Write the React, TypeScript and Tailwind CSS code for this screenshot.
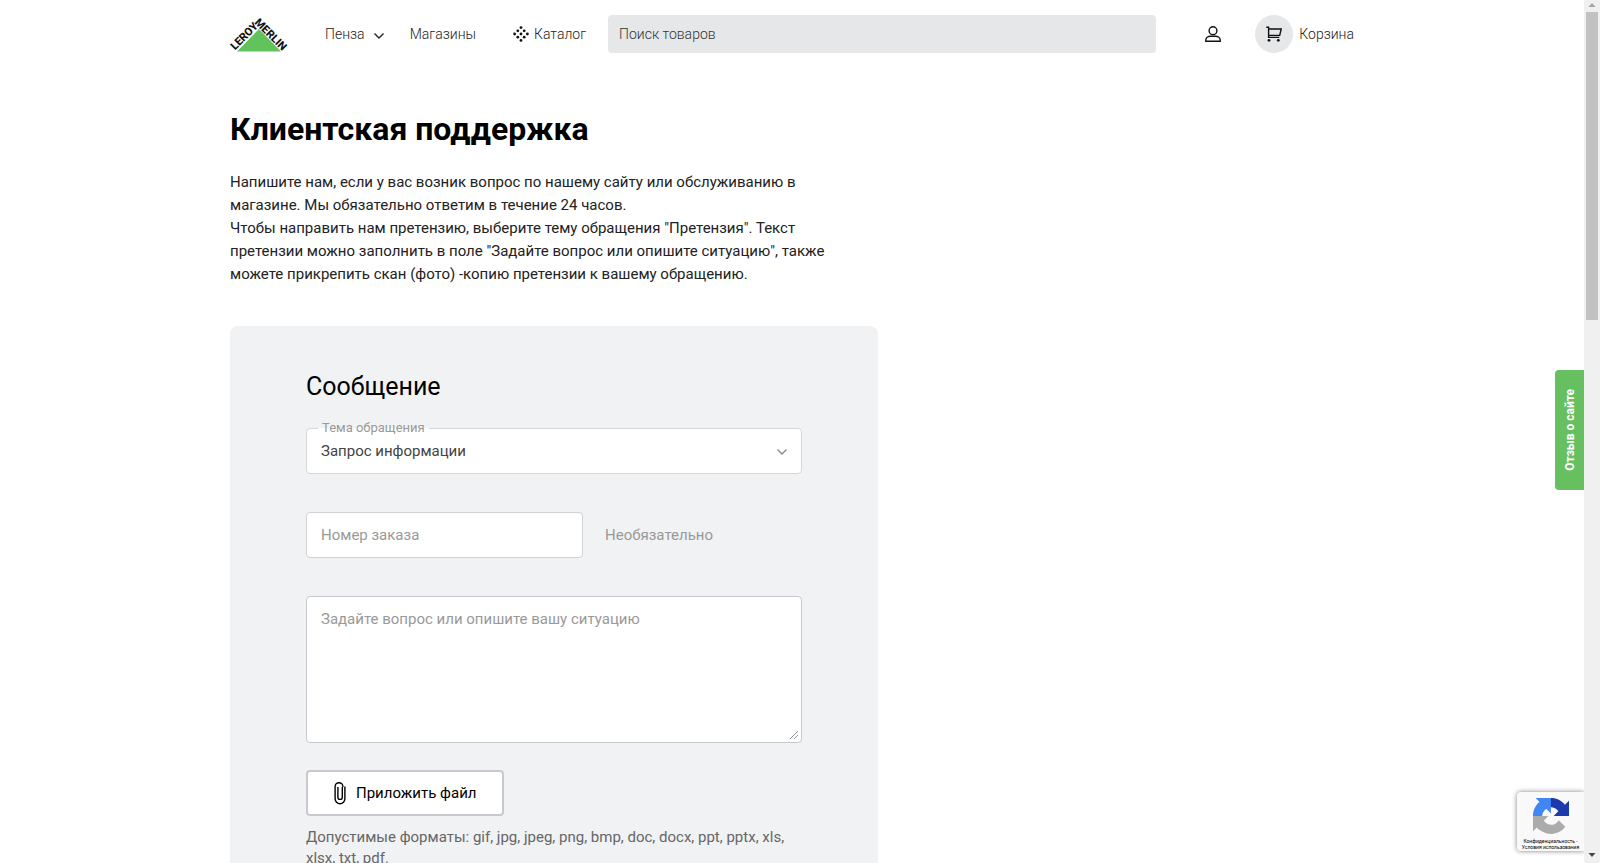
import React, { useState } from 'react';

// ─── Data ─────────────────────────────────────────────────────────────────────

const TOPICS = ['Запрос информации', 'Претензия', 'Благодарность', 'Предложение'];

const FORMATS = ['gif', 'jpg', 'jpeg', 'png', 'bmp', 'doc', 'docx', 'ppt', 'pptx', 'xls', 'xlsx', 'txt', 'pdf'];

// ─── Icons ────────────────────────────────────────────────────────────────────

const Logo: React.FC = () => (
  <svg viewBox="0 0 58 36" className="h-9 w-[58px] overflow-visible" role="img" aria-label="Leroy Merlin">
    <path d="M7 35.5 29 13l22 22.5Z" fill="#62c25c" />
    <g fill="#111" fontFamily="Roboto, sans-serif" fontWeight="800" fontSize="11">
      <text transform="translate(5 34.5) rotate(-45)">LEROY</text>
      <text transform="translate(24 7) rotate(45)">MERLIN</text>
    </g>
  </svg>
);

const Chevron: React.FC<{ className?: string }> = ({ className }) => (
  <svg viewBox="0 0 12 8" className={className} fill="none" stroke="currentColor" strokeWidth="1.4">
    <path d="m1.5 1.5 4.5 4.5 4.5-4.5" />
  </svg>
);

const CatalogIcon: React.FC = () => (
  <svg viewBox="0 0 16 16" className="h-4 w-4" fill="#111">
    {[
      [8, 1.6], [8, 14.4], [1.6, 8], [14.4, 8], [4.8, 4.8],
      [11.2, 4.8], [4.8, 11.2], [11.2, 11.2], [8, 8],
    ].map(([x, y]) => (
      <circle key={`${x}-${y}`} cx={x} cy={y} r="1.4" />
    ))}
  </svg>
);

const UserIcon: React.FC = () => (
  <svg viewBox="0 0 16 16" className="h-4 w-4" fill="none" stroke="#111" strokeWidth="1.4">
    <circle cx="8" cy="4.7" r="3.9" />
    <path d="M.8 15.2v-1.1c0-2.5 2.3-3.9 4.6-3.9h5.2c2.3 0 4.6 1.4 4.6 3.9v1.1Z" />
  </svg>
);

const CartIcon: React.FC = () => (
  <svg viewBox="0 0 16 16" className="h-4 w-4" fill="none" stroke="#111" strokeWidth="1.4">
    <path d="M.3 1.2h2.3v10.2h10.7M2.6 3h12.6l-1.5 6.4H2.6" />
    <circle cx="3" cy="14.3" r="1.4" fill="#111" stroke="none" />
    <circle cx="12.3" cy="14.3" r="1.4" fill="#111" stroke="none" />
  </svg>
);

const ClipIcon: React.FC = () => (
  <svg viewBox="0 0 12 24" className="h-6 w-3" fill="none" stroke="#000" strokeWidth="1.4">
    <path d="M8.3 6v10.2a2.2 2.2 0 0 1-4.4 0V6M8.9 6V5.6a3.9 3.9 0 0 0-7.8 0v12.2a4.9 4.9 0 0 0 9.8 0V5.5" />
  </svg>
);

const RecaptchaIcon: React.FC = () => (
  <svg viewBox="0 0 64 64" className="h-9 w-9">
    <path fill="#1c3aa9" d="M64 31.955l-.033-1.37V4.687l-7.16 7.16C50.948 4.674 42.033.093 32.05.093c-10.4 0-19.622 4.96-25.458 12.64l11.736 11.86a15.55 15.55 0 0 1 4.754-5.334c2.05-1.6 4.952-2.906 8.968-2.906.485 0 .86.057 1.135.163 4.976.393 9.288 3.14 11.828 7.124l-8.307 8.307L64 31.953" />
    <path fill="#4285f4" d="M31.862.094l-1.37.033H4.594l7.16 7.16C4.58 13.147 0 22.06 0 32.046c0 10.4 4.96 19.622 12.64 25.458L24.5 45.768a15.55 15.55 0 0 1-5.334-4.754c-1.6-2.05-2.906-4.952-2.906-8.968 0-.485.057-.86.163-1.135.393-4.976 3.14-9.288 7.124-11.828l8.307 8.307L31.86.095" />
    <path fill="#ababab" d="M.001 32.045l.033 1.37v25.898l7.16-7.16c5.86 7.173 14.774 11.754 24.76 11.754 10.4 0 19.622-4.96 25.458-12.64l-11.736-11.86a15.55 15.55 0 0 1-4.754 5.334c-2.05 1.6-4.952 2.906-8.968 2.906-.485 0-.86-.057-1.135-.163-4.976-.393-9.288-3.14-11.828-7.124l8.307-8.307c-10.522.04-22.4.066-27.295-.005" />
  </svg>
);

// ─── Blocks ───────────────────────────────────────────────────────────────────

const Header: React.FC = () => (
  <header className="flex h-[68px] items-center text-sm font-light text-[#222]">
    <a href="#" className="mr-[37px] shrink-0"><Logo /></a>
    <nav className="flex shrink-0 items-center">
      <button type="button" className="mr-[25px] flex items-center gap-2">
        Пенза <Chevron className="mt-1 h-2 w-3 text-[#222]" />
      </button>
      <a href="#" className="mr-[37px]">Магазины</a>
      <a href="#" className="mr-[22px] flex items-center gap-[5px]">
        <CatalogIcon /> Каталог
      </a>
    </nav>
    <input
      type="search"
      aria-label="Поиск товаров"
      placeholder="Поиск товаров"
      className="mr-[49px] h-[38px] min-w-0 flex-1 rounded bg-[#e6e7e9] px-[11px] text-sm outline-none placeholder:text-[#333]"
    />
    <a href="#" aria-label="Профиль" className="mr-[34px]"><UserIcon /></a>
    <a href="#" className="flex items-center gap-1.5">
      <span className="flex h-[38px] w-[38px] items-center justify-center rounded-full bg-[#e6e7e9]">
        <CartIcon />
      </span>
      Корзина
    </a>
  </header>
);

const SupportForm: React.FC = () => {
  const [topic, setTopic] = useState(TOPICS[0]);

  return (
    <form className="mt-10 max-w-[648px] rounded-lg bg-[#f1f2f4] px-[76px] pt-[45px] pb-16">
      <h2 className="mb-[25px] text-[25px] leading-8 text-black">Сообщение</h2>

      <div className="relative">
        <label
          htmlFor="topic"
          className="absolute -top-2.5 left-3 bg-linear-to-b from-[#f1f2f4] from-50% to-white to-50% px-1 text-[13px] leading-5 text-[#999]"
        >
          Тема обращения
        </label>
        <select
          id="topic"
          value={topic}
          onChange={e => setTopic(e.target.value)}
          className="h-[46px] w-full appearance-none rounded border border-[#d5d6d9] bg-white px-[14px] text-[15px] text-[#444] outline-none"
        >
          {TOPICS.map(t => <option key={t}>{t}</option>)}
        </select>
        <Chevron className="pointer-events-none absolute top-5 right-3.5 h-2 w-3 text-[#888]" />
      </div>

      <div className="mt-[38px] flex items-center gap-[22px]">
        <input
          id="order"
          type="text"
          placeholder="Номер заказа"
          className="h-[46px] w-[277px] rounded border border-[#d0d1d5] bg-white px-[14px] outline-none placeholder:text-[#999]"
        />
        <label htmlFor="order" className="text-[#999]">Необязательно</label>
      </div>

      <div className="relative mt-[38px]">
        <textarea
          aria-label="Задайте вопрос или опишите вашу ситуацию"
          placeholder="Задайте вопрос или опишите вашу ситуацию"
          className="block h-[147px] w-full resize-none rounded border border-[#c8c9d0] bg-white px-[14px] py-2.5 leading-6 outline-none placeholder:text-[#999]"
        />
        <svg viewBox="0 0 8 8" className="pointer-events-none absolute right-1 bottom-1 h-2 w-2" stroke="#777" strokeWidth=".8">
          <path d="M0 8 8 0M4 8l4-4" />
        </svg>
      </div>

      <button
        type="button"
        className="mt-[27px] flex h-[46px] items-center gap-2.5 rounded border-2 border-[#c8c9d0] bg-white px-[26px] text-black"
      >
        <ClipIcon /> Приложить файл
      </button>
      <p className="mt-[11px] leading-[21px] text-[#666]">{`Допустимые форматы: ${FORMATS.join(', ')}.`}</p>
    </form>
  );
};

const Scrollbar: React.FC = () => (
  <div className="flex w-4 shrink-0 flex-col items-center bg-[#f0f0f0]">
    <svg viewBox="0 0 16 12" className="h-3 w-4" fill="#a3a3a3"><path d="M4.5 7 8 3l3.5 4Z" /></svg>
    <div className="h-[308px] w-3 bg-[#c1c1c1]" />
    <svg viewBox="0 0 16 16" className="mt-auto h-4 w-4" fill="#444"><path d="M4.5 6 8 10l3.5-4Z" /></svg>
  </div>
);

// ─── Page ─────────────────────────────────────────────────────────────────────

const App: React.FC = () => (
  <div className="flex h-screen bg-white font-[Roboto,sans-serif] text-[15px]">
    <div className="relative min-w-0 flex-1 overflow-hidden">
      <div className="mx-auto max-w-[1124px]">
        <Header />
        <main className="pt-[41px]">
          <h1 className="text-[32px] leading-10 font-bold text-black">Клиентская поддержка</h1>
          <p className="mt-[22px] max-w-[620px] leading-[23px] text-[#222]">
            Напишите нам, если у вас возник вопрос по нашему сайту или обслуживанию в<br />
            магазине. Мы обязательно ответим в течение 24 часов.
            <br />
            Чтобы направить нам претензию, выберите тему обращения "Претензия". Текст<br />
            претензии можно заполнить в поле "Задайте вопрос или опишите ситуацию", также<br />
            можете прикрепить скан (фото) -копию претензии к вашему обращению.
          </p>
          <SupportForm />
        </main>
      </div>

      {/* Feedback tab */}
      <button
        type="button"
        className="absolute top-[370px] right-0 flex h-[120px] w-[29px] items-center justify-center rounded-l bg-[#66c05f] text-xs font-bold text-white"
      >
        <span className="rotate-180 [writing-mode:vertical-rl]">Отзыв о сайте</span>
      </button>

      {/* Captcha badge */}
      <div className="absolute right-0 bottom-3 flex h-[59px] w-[67px] flex-col items-center rounded-l-sm bg-[#f9f9f9] pt-1.5 text-[5px] leading-[6px] text-black shadow-[0_0_5px_gray]">
        <RecaptchaIcon />
        <div className="mt-1 text-center whitespace-nowrap">
          <a href="#">Конфиденциальность</a> -<br />
          <a href="#">Условия использования</a>
        </div>
      </div>
    </div>
    <Scrollbar />
  </div>
);

export default App;
